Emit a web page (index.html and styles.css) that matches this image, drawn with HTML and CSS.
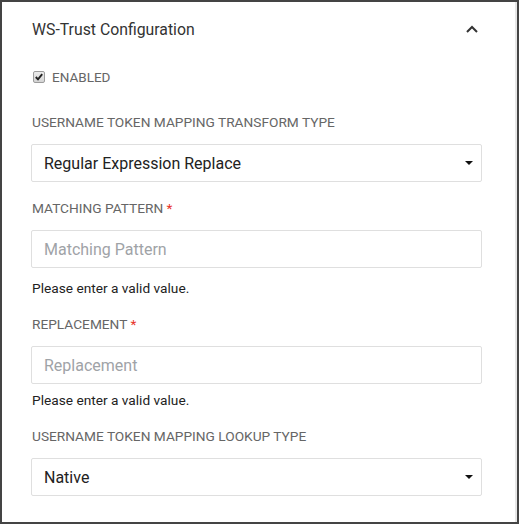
FILE: index.html
```html
<!DOCTYPE html>
<html>
<head>
<meta charset="utf-8">
<link rel="stylesheet" href="styles.css">
</head>
<body>
<div class="frame">
  <div class="panel">
    <div class="header">
      <h2 class="title">WS-Trust Configuration</h2>
      <svg class="chevron" width="12" height="8" viewBox="0 0 12 8"><path d="M1 7 L6 2 L11 7" fill="none" stroke="#333" stroke-width="2"/></svg>
    </div>
    <label class="check-row">
      <span class="checkbox"><svg width="10" height="10" viewBox="0 0 10 10"><path d="M1.8 5 L4 7.4 L8.2 2.2" fill="none" stroke="#222" stroke-width="1.9"/></svg></span>
      <span class="check-label">ENABLED</span>
    </label>

    <div class="group g1">
      <div class="label">USERNAME TOKEN MAPPING TRANSFORM TYPE</div>
      <div class="box select"><span class="value">Regular Expression Replace</span><span class="caret"></span></div>
    </div>

    <div class="group g2">
      <div class="label">MATCHING PATTERN <span class="req">*</span></div>
      <div class="box input"><span class="placeholder">Matching Pattern</span></div>
      <div class="error e1">Please enter a valid value.</div>
    </div>

    <div class="group g3">
      <div class="label">REPLACEMENT <span class="req">*</span></div>
      <div class="box input"><span class="placeholder">Replacement</span></div>
      <div class="error e2">Please enter a valid value.</div>
    </div>

    <div class="group g4">
      <div class="label">USERNAME TOKEN MAPPING LOOKUP TYPE</div>
      <div class="box select"><span class="value">Native</span><span class="caret"></span></div>
    </div>
  </div>
</div>
</body>
</html>
```

FILE: styles.css
```css
* { box-sizing: border-box; }
html, body { margin: 0; padding: 0; }
body {
  font-family: Roboto, "Liberation Sans", sans-serif;
  background: #444;
}
.frame {
  width: 519px;
  height: 524px;
  border: 2px solid #444;
  background: #444;
}
.panel {
  height: 100%;
  background: #fff;
  border-right: 2px solid #e6e6e6;
  padding: 18px 33px 0 29px;
}
.header {
  display: flex;
  align-items: center;
  justify-content: space-between;
  height: 20px;
  padding-left: 1px;
}
.title {
  margin: 0;
  font-size: 15.8px;
  font-weight: 400;
  line-height: 20px;
  color: #333;
}
.chevron { margin-right: 4px; margin-top: -2px; }
.check-row {
  display: flex;
  align-items: center;
  margin-top: 29px;
  height: 16px;
  padding-left: 2px;
}
.checkbox {
  width: 12px;
  height: 12px;
  border: 1px solid #9c9c9c;
  border-radius: 2px;
  background: linear-gradient(#ececec, #d4d4d4);
  display: flex;
  align-items: center;
  justify-content: center;
}
.check-label {
  margin-left: 7px;
  font-size: 13.5px;
  color: #666;
  line-height: 16px;
}
.group { margin-top: 18px; }
.g1 { margin-top: 29px; }
.label {
  font-size: 13.7px;
  line-height: 16px;
  color: #666;
  padding-left: 1px;
  margin-bottom: 14px;
}
.req { color: #e8342a; }
.box {
  height: 38px;
  border: 1px solid #dfdfdf;
  border-radius: 2px;
  display: flex;
  align-items: center;
  justify-content: space-between;
  padding: 0 8px 0 12px;
  font-size: 16px;
}
.value { color: #222; }
.placeholder { color: #9fa3a7; }
.caret {
  width: 0;
  height: 0;
  border-top: 4px solid #111;
  border-left: 4px solid transparent;
  border-right: 4px solid transparent;
}
.error {
  font-size: 13.7px;
  line-height: 16px;
  color: #222;
  padding-left: 1px;
}
.e1 { margin-top: 12px; }
.e2 { margin-top: 8px; }
.g3 { margin-top: 20px; }
.g4 { margin-top: 20px; }
```
